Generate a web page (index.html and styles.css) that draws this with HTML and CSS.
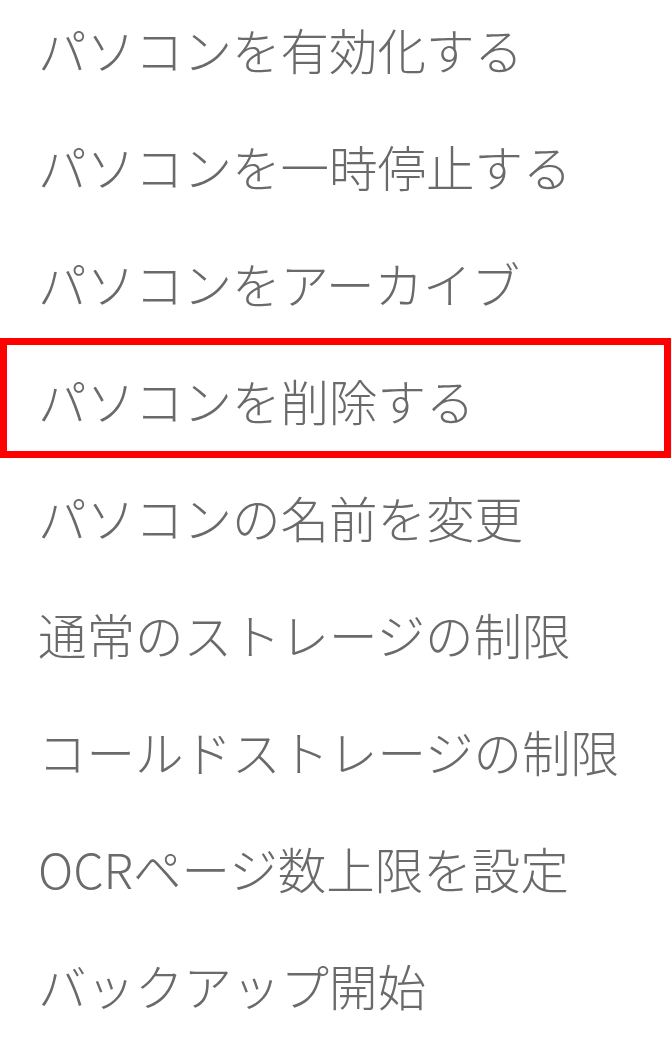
FILE: index.html
```html
<!DOCTYPE html>
<html lang="ja">
<head>
<meta charset="utf-8">
<title>メニュー</title>
<link rel="stylesheet" href="styles.css">
</head>
<body>
<ul class="menu">
  <li class="menu-item">パソコンを有効化する</li>
  <li class="menu-item">パソコンを一時停止する</li>
  <li class="menu-item">パソコンをアーカイブ</li>
  <li class="menu-item is-marked">パソコンを削除する</li>
  <li class="menu-item">パソコンの名前を変更</li>
  <li class="menu-item">通常のストレージの制限</li>
  <li class="menu-item">コールドストレージの制限</li>
  <li class="menu-item">OCRページ数上限を設定</li>
  <li class="menu-item">バックアップ開始</li>
</ul>
</body>
</html>
```
FILE: styles.css
```css
html, body {
  margin: 0;
  padding: 0;
  background: #ffffff;
}

body {
  width: 671px;
  height: 1039px;
  overflow: hidden;
  font-family: "Noto Sans CJK JP", "Noto Sans", sans-serif;
}

.menu {
  list-style: none;
  margin: 0;
  padding: 0;
  display: flex;
  flex-direction: column;
}

.menu-item {
  position: relative;
  height: 117px;
  box-sizing: border-box;
  padding: 0 0 18px 38px;
  line-height: 99px;
  font-size: 48.5px;
  font-weight: 300;
  color: #6a6a6a;
  white-space: nowrap;
}

.menu-item.is-marked::after {
  content: "";
  position: absolute;
  left: 0;
  right: 0;
  top: -13px;
  height: 120px;
  box-sizing: border-box;
  border: 7px solid #ff0000;
}
```
